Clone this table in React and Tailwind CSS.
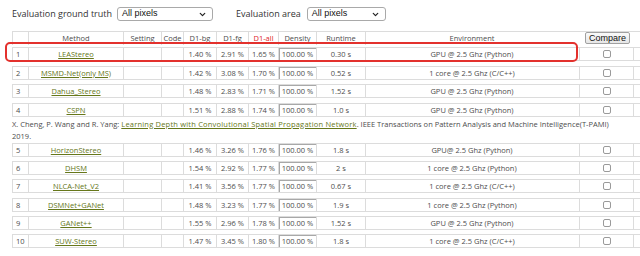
import { ChevronDown } from 'lucide-react'

const cols = 'grid grid-cols-[16px_95px_38px_22px_33px_32px_30px_38px_49px_213px_56px]'

const rows = [
  ['1', 'LEAStereo', '1.40 %', '2.91 %', '1.65 %', '100.00 %', '0.30 s', 'GPU @ 2.5 Ghz (Python)'],
  ['2', 'MSMD-Net(only MS)', '1.42 %', '3.08 %', '1.70 %', '100.00 %', '0.52 s', '1 core @ 2.5 Ghz (C/C++)'],
  ['3', 'Dahua_Stereo', '1.48 %', '2.83 %', '1.71 %', '100.00 %', '1.52 s', 'GPU @ 2.5 Ghz (Python)'],
  ['4', 'CSPN', '1.51 %', '2.88 %', '1.74 %', '100.00 %', '1.0 s', 'GPU @ 2.5 Ghz (Python)'],
]

const rows2 = [
  ['5', 'HorizonStereo', '1.46 %', '3.26 %', '1.76 %', '100.00 %', '1.8 s', 'GPU@ 2.5 Ghz (Python)'],
  ['6', 'DHSM', '1.54 %', '2.92 %', '1.77 %', '100.00 %', '2 s', '1 core @ 2.5 Ghz (Python)'],
  ['7', 'NLCA-Net_V2', '1.41 %', '3.56 %', '1.77 %', '100.00 %', '0.67 s', '1 core @ 2.5 Ghz (C/C++)'],
  ['8', 'DSMNet+GANet', '1.48 %', '3.23 %', '1.77 %', '100.00 %', '1.9 s', '1 core @ 2.5 Ghz (Python)'],
  ['9', 'GANet++', '1.55 %', '2.96 %', '1.78 %', '100.00 %', '1.52 s', 'GPU @ 2.5 Ghz (Python)'],
  ['10', 'SUW-Stereo', '1.47 %', '3.45 %', '1.80 %', '100.00 %', '1.8 s', '1 core @ 2.5 Ghz (C/C++)'],
]

function Select({ label, width }) {
  return (
    <div
      className={`flex items-center justify-between h-[14px] ${width} bg-white border border-[#a9a9a9] rounded-[3px] pl-[4px] pr-[5px] font-['Liberation_Sans',sans-serif] text-[9px] text-[#111]`}
    >
      <span>{label}</span>
      <ChevronDown size={9} strokeWidth={3.2} className="text-[#222]" />
    </div>
  )
}

function Row({ r }) {
  const [rank, method, bg, fg, all, density, runtime, env] = r
  return (
    <div className={`${cols} h-[14px] border-y border-[#dcdcdc] text-[7.5px] text-[#4d4d4d] leading-[12px]`}>
      <div className="border-l border-[#dcdcdc] pl-[3px]">{rank}</div>
      <div className="border-l border-[#dcdcdc] text-center">
        <span className="text-[#66771a] underline underline-offset-1">{method}</span>
      </div>
      <div className="border-l border-[#dcdcdc]" />
      <div className="border-l border-[#dcdcdc]" />
      <div className="border-l border-[#dcdcdc] text-center">{bg}</div>
      <div className="border-l border-[#dcdcdc] text-center">{fg}</div>
      <div className="border-l border-[#dcdcdc] text-center">{all}</div>
      <div className="border-l border-[#dcdcdc] text-center shadow-[inset_1px_1px_0_#a8a8a8]">{density}</div>
      <div className="border-l border-[#dcdcdc] text-center">{runtime}</div>
      <div className="border-l border-[#dcdcdc] text-center">{env}</div>
      <div className="border-x border-[#dcdcdc] ml-[1px] flex items-center justify-center">
        <span className="w-[8px] h-[8px] rounded-[2px] border border-[#9a9a9a] bg-white" />
      </div>
    </div>
  )
}

export default function App() {
  return (
    <div className="relative w-[640px] h-[256px] bg-white overflow-hidden font-['Open_Sans',sans-serif]">
      {/* Filters */}
      <div className="flex items-center pt-[7px] pl-[12px] text-[9px] text-[#333]">
        <span className="mr-[5px]">Evaluation ground truth</span>
        <Select label="All pixels" width="w-[96px]" />
        <span className="ml-[23px] mr-[6px]">Evaluation area</span>
        <Select label="All pixels" width="w-[79px]" />
      </div>

      <div className="pl-[12px] pt-[10px]">
        {/* Header */}
        <div className={`${cols} h-[14px] border-t border-[#dcdcdc] text-[7.5px] text-[#4d4d4d] leading-[13px]`}>
          <div className="border-l border-[#dcdcdc]" />
          <div className="border-l border-[#dcdcdc] text-center">Method</div>
          <div className="border-l border-[#dcdcdc] text-center">Setting</div>
          <div className="border-l border-[#dcdcdc] text-center">Code</div>
          <div className="border-l border-[#dcdcdc] text-center">D1-bg</div>
          <div className="border-l border-[#dcdcdc] text-center">D1-fg</div>
          <div className="border-l border-[#dcdcdc] text-center text-[#e0262a]">D1-all</div>
          <div className="border-l border-[#dcdcdc] text-center">Density</div>
          <div className="border-l border-[#dcdcdc] text-center">Runtime</div>
          <div className="border-l border-[#dcdcdc] text-center">Environment</div>
          <div className="flex items-start justify-center pl-[3px]">
            <button className="h-[12px] px-[3px] bg-gradient-to-b from-[#fafafa] to-[#e6e6e6] border border-[#a0a0a0] rounded-[2px] font-['Liberation_Sans',sans-serif] text-[9px] leading-[10px] text-[#111]">
              Compare
            </button>
          </div>
        </div>

        <div className="flex flex-col gap-[4.5px] mt-[2px]">
          {rows.map((r) => (
            <Row key={r[0]} r={r} />
          ))}
        </div>

        <p className="mt-[1px] text-[7.5px] leading-[12.5px] text-[#4d4d4d]">
          X. Cheng, P. Wang and R. Yang:{' '}
          <span className="text-[#66771a] underline underline-offset-1 tracking-[0.2px]">
            Learning Depth with Convolutional Spatial Propagation Network
          </span>
          . IEEE Transactions on Pattern Analysis and Machine Intelligence(T-PAMI)
          <br />
          2019.
        </p>

        <div className="flex flex-col gap-[4.4px] mt-0">
          {rows2.map((r) => (
            <Row key={r[0]} r={r} />
          ))}
        </div>
      </div>

      {/* highlight */}
      <div className="absolute left-[5px] top-[42px] w-[573px] h-[20px] border-2 border-[#e3312d] rounded-[5px]" />
    </div>
  )
}
